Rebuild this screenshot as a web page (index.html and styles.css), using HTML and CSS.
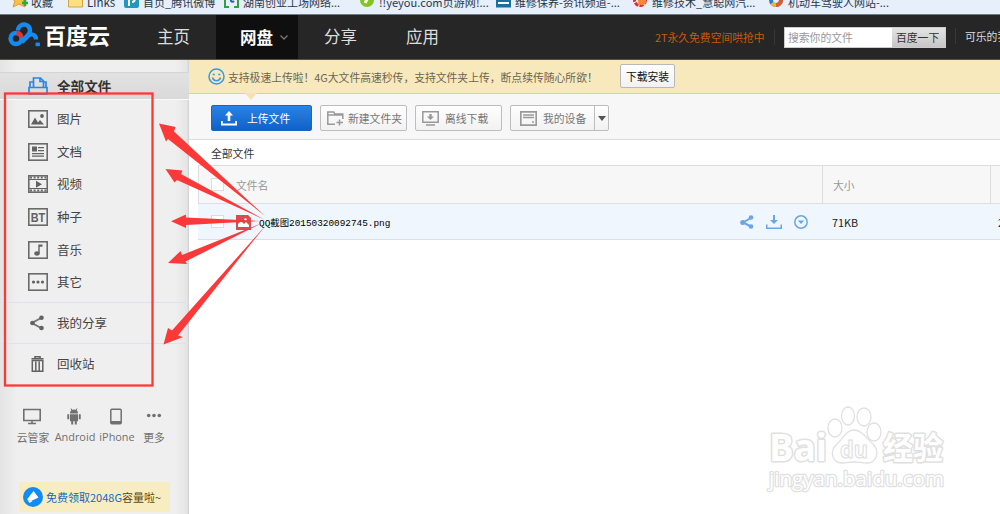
FILE: index.html
```html
<!DOCTYPE html>
<html lang="zh-CN">
<head>
    <meta charset="UTF-8">
    <meta name="viewport" content="width=device-width, initial-scale=1.0">
    <title>百度云 网盘</title>
    <link rel="stylesheet" href="styles.css">
</head>
<body>

<!-- Browser bookmarks -->
<div class="bookmarks">
    <div class="bookmark fav">
        <svg width="19" height="18" viewBox="0 0 19 18"><path d="M9 0l3 6 6 1-5 4 2 6-6-3-6 3 2-6-5-4 6-1z" fill="#fbc04a" stroke="#e59a2c"/><path d="M15 10v6M12 13h6" stroke="#3aa53a" stroke-width="2.500"/></svg>
        <span>收藏</span>
    </div>
    <div class="bookmark links">
        <svg width="15" height="16" viewBox="0 0 15 16"><path d="M.5 2h6l2 2h6v11H.5z" fill="#fbdf83" stroke="#d3a740"/></svg>
        <span>Links</span>
    </div>
    <div class="bookmark weibo">
        <svg width="15" height="16" viewBox="0 0 15 16"><rect width="15" height="16" rx="2" fill="#2397bd"/><path d="M5 14V6a3 3 0 1 1 3 4" fill="none" stroke="#fff" stroke-width="2"/></svg>
        <span>首页_腾讯微博</span>
    </div>
    <div class="bookmark market">
        <svg width="15" height="16" viewBox="0 0 15 16"><path d="M5 1H1v14h4M10 1h4v14h-4" fill="none" stroke="#2f9f4b" stroke-width="2"/><path d="M7 4v5a2 2 0 0 0 3 0" fill="none" stroke="#2767b5" stroke-width="2"/></svg>
        <span>湖南创业工场网络...</span>
    </div>
    <div class="bookmark yeyou">
        <svg width="15" height="16" viewBox="0 0 15 16"><circle cx="7" cy="8" r="7" fill="#83c51d"/><path d="M10 2L5 11" stroke="#fff" stroke-width="3"/></svg>
        <span>!!yeyou.com页游网!...</span>
    </div>
    <div class="bookmark repair">
        <svg width="15" height="16" viewBox="0 0 15 16"><rect width="15" height="15.500" fill="#16719f"/><path d="M2 11h11M3 7l2-2h5l2 2" stroke="#fff" stroke-width="2" fill="none"/></svg>
        <span>维修保养-资讯频道-...</span>
    </div>
    <div class="bookmark tech">
        <svg width="15" height="16" viewBox="0 0 15 16"><circle cx="7" cy="8" r="5.500" fill="none" stroke="#e02c2c" stroke-width="3" stroke-dasharray="4 1"/><circle cx="9" cy="9" r="4" fill="#f48b31"/></svg>
        <span>维修技术_慧聪网汽...</span>
    </div>
    <div class="bookmark driver">
        <svg width="15" height="16" viewBox="0 0 15 16"><circle cx="7" cy="8" r="5" fill="none" stroke="#2b7cd3" stroke-width="4"/><path d="M12 8a5 5 0 0 1-5 5" fill="none" stroke="#e55a2b" stroke-width="4"/><path d="M7 13a5 5 0 0 1-4-2" fill="none" stroke="#f2b52b" stroke-width="4"/></svg>
        <span>机动车驾驶人网站-...</span>
    </div>
</div>

<!-- Top navigation -->
<header class="header">
    <div class="logo">
        <svg width="33" height="27" viewBox="0 0 33 27" fill="none" stroke-width="4.400">
            <circle cx="8" cy="17.500" r="5.500" stroke="#148bf0"/>
            <path d="M10 9.500a6 6 0 1 1 10 4.500l-7 7" stroke="#148bf0"/>
            <path d="M8.500 12a5.500 5.500 0 0 1 5 4.500" stroke="#e5322d"/>
            <path d="M14 21l6.500-6.500c3.500-2.500 7.500-.5 7.500 4" stroke="#148bf0"/>
            <rect x="27.500" y="21.500" width="4.500" height="3.800" rx="1" fill="#148bf0" stroke="none"/>
        </svg>
        <span>百度云</span>
    </div>
    <nav class="nav">
        <a>主页</a>
        <a class="active">网盘<svg width="10" height="7" viewBox="0 0 10 7"><path d="M1.500 1.500L5 5l3.500-3.500" fill="none" stroke="#777" stroke-width="1.300"/></svg></a>
        <a>分享</a>
        <a>应用</a>
    </nav>
    <div class="promo">2T永久免费空间哄抢中</div>
    <div class="search">
        <div class="search-input">搜索你的文件</div>
        <div class="search-button">百度一下</div>
    </div>
    <div class="user">可乐的我们</div>
</header>

<div class="main">
    <aside class="sidebar">
        <div class="side-item all">
            <svg width="20" height="18" viewBox="0 0 20 18" fill="none" stroke="#2b86e3" stroke-width="1.700"><path d="M5.500 10V1h7l3 3v6M2 10V5h3.500M15.500 5H18v5M1 10.500h18V17H1z"/><path d="M12 1v3.500h3.500"/></svg>
            <span>全部文件</span>
        </div>
        <div class="side-group">
            <div class="side-item">
                <svg class="icon" width="20" height="18" viewBox="0 0 20 18"><rect class="box" x=".8" y=".8" width="18.400" height="16.400"/><path d="M3 14.500l4-7 3 5 2-2.500 4 4.500z"/><circle cx="14" cy="6" r="1.900"/></svg>
                <span>图片</span>
            </div>
            <div class="side-item">
                <svg class="icon" width="20" height="18" viewBox="0 0 20 18"><rect class="box" x=".8" y=".8" width="18.400" height="16.400"/><path d="M4 3.500h5v5H4zM10 4h6v1.200h-6zM10 7h6v1.200h-6zM4 10h12v1.200H4zM4 12.600h12v1.200H4z"/></svg>
                <span>文档</span>
            </div>
            <div class="side-item">
                <svg class="icon" width="20" height="18" viewBox="0 0 20 18"><rect class="box" x=".8" y=".8" width="18.400" height="16.400"/><path class="film" d="M2 2.500h16M2 15.500h16"/><path d="M1 4h18v1H1zM1 13h18v1H1zM8 5.700l6 3.500-6 3.500z"/></svg>
                <span>视频</span>
            </div>
            <div class="side-item">
                <svg class="icon" width="20" height="18" viewBox="0 0 20 18"><rect class="box" x=".8" y=".8" width="18.400" height="16.400"/><text x="10" y="13.600" text-anchor="middle" textLength="14.500" lengthAdjust="spacingAndGlyphs">BT</text></svg>
                <span>种子</span>
            </div>
            <div class="side-item">
                <svg class="icon" width="20" height="18" viewBox="0 0 20 18"><rect class="box" x=".8" y=".8" width="18.400" height="16.400"/><ellipse cx="9" cy="12.500" rx="2.700" ry="2.200"/><path d="M10.300 3.500h4.200v2.300h-2.800v6.500h-1.400z"/></svg>
                <span>音乐</span>
            </div>
            <div class="side-item">
                <svg class="icon" width="20" height="18" viewBox="0 0 20 18"><rect class="box" x=".8" y=".8" width="18.400" height="16.400"/><circle cx="5.500" cy="9" r="1.600"/><circle cx="10" cy="9" r="1.600"/><circle cx="14.500" cy="9" r="1.600"/></svg>
                <span>其它</span>
            </div>
        </div>
        <div class="side-item share">
            <svg class="icon" width="20" height="16" viewBox="0 0 20 16"><path d="M13 3L4 8l9 5" fill="none" stroke="#777" stroke-width="2"/><circle cx="13.500" cy="2.700" r="2.300"/><circle cx="4.500" cy="8" r="2.300"/><circle cx="13.500" cy="13" r="2.300"/></svg>
            <span>我的分享</span>
        </div>
        <div class="side-item trash">
            <svg class="icon" width="20" height="16" viewBox="0 0 20 16"><path d="M3.500 2.800h12M7 2.500V.8h5v1.700" fill="none" stroke="#626262" stroke-width="1.600"/><path d="M4.300 4.500h10.500v10.700H4.300zM7.800 5.500v9M11.200 5.500v9" fill="none" stroke="#626262" stroke-width="1.500"/></svg>
            <span>回收站</span>
        </div>
        <div class="clients">
            <div class="client pc">
                <svg width="18" height="16" viewBox="0 0 18 16" fill="none" stroke="#707070" stroke-width="1.600"><path d="M.8 1h16.400v11H.8zM9 12v3M5 15h8"/></svg>
                <span>云管家</span>
            </div>
            <div class="client android">
                <svg width="14" height="17" viewBox="0 0 14 17" fill="#707070"><path d="M3 5.500a4 4 0 0 1 8 0zM3 6.200h8v7H3zM.3 6.200h1.900v5H.3zM11.800 6.200h1.900v5h-1.900zM4.200 12h2v4.500h-2zM7.800 12h2v4.500h-2z"/><path d="M4 .5l1 2M10 .5l-1 2" stroke="#707070"/></svg>
                <span>Android</span>
            </div>
            <div class="client iphone">
                <svg width="12" height="16" viewBox="0 0 12 16" fill="none" stroke="#707070" stroke-width="1.500"><rect x=".8" y=".8" width="10.400" height="14.400" rx="1"/><path d="M1 13.500h10" stroke-width="2"/></svg>
                <span>iPhone</span>
            </div>
            <div class="client more">
                <svg width="16" height="16" viewBox="0 0 16 16" fill="#707070"><circle cx="2.700" cy="7" r="1.800"/><circle cx="8" cy="7" r="1.800"/><circle cx="13.300" cy="7" r="1.800"/></svg>
                <span>更多</span>
            </div>
        </div>
        <div class="capacity">
            <svg width="20" height="20" viewBox="0 0 20 20"><circle cx="10" cy="10" r="10" fill="#108cf5"/><path d="M4 12.500L10.500 4l5 6.500L8 14z" fill="#fff"/><path d="M4.500 13l2 3 3-2z" fill="#fff"/></svg>
            <span><b>免费领取2048G</b>容量啦~</span>
        </div>
    </aside>

    <section class="content">
        <div class="notice">
            <svg width="17" height="17" viewBox="0 0 17 17" fill="none" stroke="#3b97e3" stroke-width="1.500"><circle cx="8.500" cy="8.500" r="7.500"/><path d="M4.500 9.500c1 4.300 7 4.300 8 0M4.700 6.500h2M10.300 6.500h2"/></svg>
            <span class="notice-text">支持极速上传啦！4G大文件高速秒传，支持文件夹上传，断点续传随心所欲！</span>
            <button class="install">下载安装</button>
            <i class="notch"></i>
        </div>
        <div class="toolbar">
            <div class="btn upload">
                <svg width="16" height="15" viewBox="0 0 16 15" fill="#fff"><path d="M8 0l4 4.500H9.300V10H6.700V4.500H4zM0 10h1.800v2.500h12.400V10H16v4.500H0z"/></svg>
                <span>上传文件</span>
            </div>
            <div class="btn folder">
                <svg width="17" height="15" viewBox="0 0 17 15" fill="none" stroke="#999" stroke-width="1.500"><path d="M8 13.300H.8V1h6l1 2h8v5M.8 4h15M12.500 8.500v6M9.500 11.500h6.500"/></svg>
                <span>新建文件夹</span>
            </div>
            <div class="btn offline">
                <svg width="17" height="15" viewBox="0 0 17 15" fill="none" stroke="#999" stroke-width="1.500"><path d="M.8.800h15.400v10.400H.8zM4 14h9"/><path d="M7.300 3h2.400v2.500H12L8.500 9 5 5.500h2.300z" fill="#999" stroke="none"/></svg>
                <span>离线下载</span>
            </div>
            <div class="btn device">
                <svg width="17" height="15" viewBox="0 0 17 15" fill="none" stroke="#999" stroke-width="1.700"><path d="M.8.800h15.400v13.400H.8zM3 4h11M3 6.500h11M12 11h2"/></svg>
                <span>我的设备</span>
                <i class="caret"></i>
            </div>
        </div>
        <div class="crumb">全部文件</div>
        <div class="row head">
            <div class="cell name"><i class="check"></i><span>文件名</span></div>
            <div class="cell size">大小</div>
            <div class="cell date"></div>
        </div>
        <div class="row file">
            <div class="cell name">
                <i class="check"></i>
                <svg class="thumb" width="15" height="15" viewBox="0 0 15 15"><path d="M0 0h12l3 3v12H0z" fill="#d84b4f"/><path d="M2 12V9l3-3 3 3 2-2 3 3v2z" fill="#fff"/><circle cx="9.500" cy="4.500" r="1.200" fill="#fff"/></svg>
                <span class="filename">QQ截图20150320092745.png</span>
                <div class="actions">
                    <svg width="14" height="14" viewBox="0 0 14 14" fill="#6ba5e4"><path d="M11 3L3 7.500l8 4" fill="none" stroke="#6ba5e4" stroke-width="2"/><circle cx="11" cy="2.500" r="2.300"/><circle cx="2.700" cy="7.500" r="2.500"/><circle cx="11" cy="11.500" r="2.300"/></svg>
                    <svg width="16" height="14" viewBox="0 0 16 14" fill="#6ba5e4"><path d="M7 0h2v5h3L8 9 4 5h3zM0 9.500h1.500v3h13v-3H16V14H0z"/></svg>
                    <svg width="14" height="14" viewBox="0 0 14 14"><circle cx="7" cy="7" r="6.200" fill="none" stroke="#6ba5e4" stroke-width="1.500"/><path d="M3.800 5.500h6.400L7 9z" fill="#6ba5e4"/></svg>
                </div>
            </div>
            <div class="cell size">71KB</div>
            <div class="cell date">2015</div>
        </div>
    </section>
</div>

<!-- Watermark -->
<svg class="watermark" width="190" height="94" viewBox="0 0 190 94">
    <g class="wm">
        <text class="wm-bold" x="9" y="61" font-size="37" textLength="58" lengthAdjust="spacingAndGlyphs">Bai</text>
        <ellipse cx="75" cy="28" rx="7" ry="9"/>
        <ellipse cx="88" cy="16" rx="6.500" ry="9"/>
        <ellipse cx="104" cy="17" rx="7" ry="9"/>
        <ellipse cx="114" cy="32" rx="7" ry="9"/>
        <path d="M94 30c-8 0-11 9-17 14-8 7-5 19 5 19 5 0 8-1 12-1s8 1 13 1c10 0 13-12 6-19-6-5-11-14-19-14z"/>
        <text class="wm-du" x="80" y="58" font-size="24" textLength="28" lengthAdjust="spacingAndGlyphs">du</text>
        <text class="wm-bold" x="123" y="59" font-size="31" textLength="60" lengthAdjust="spacingAndGlyphs">经验</text>
        <text class="wm-url" x="9" y="86" font-size="20" textLength="175" lengthAdjust="spacingAndGlyphs">jingyan.baidu.com</text>
    </g>
</svg>

<!-- Red frame and arrows -->
<svg class="marks" width="1000" height="514" viewBox="0 0 1000 514">
    <rect x="5" y="93.500" width="147.500" height="292" fill="none" stroke="#fd3838" stroke-width="2.300"/>
    <g fill="#fd3838">
        <path d="M159 123.500L175.500 127 174 131.500 265 216 168 139 166 141.500z"/>
        <path d="M165.500 169L182.500 170.500 181 174 264 219.500 177 180 174.500 182.500z"/>
        <path d="M171 221.300L186 214.500V217.500L260 221 186 225V228z"/>
        <path d="M168 263L180.500 251 182 255 262 223 185.500 261.500 187 264z"/>
        <path d="M163.500 344.500L168 328 172 330.500 266 225 178 335.500 183 337z"/>
    </g>
</svg>

</body>
</html>
```

FILE: styles.css
```css
* {
    box-sizing: border-box;
}
body {
    margin: 0;
    width: 1000px;
    height: 514px;
    overflow: hidden;
    background: #fff;
    font-family: "Noto Sans CJK SC", sans-serif;
    font-size: 10.8px;
    color: #444;
}
svg {
    display: block;
    flex: none;
}
span {
    white-space: nowrap;
}

/* bookmarks */
.bookmarks {
    display: flex;
    height: 15px;
    background: #e6effa;
    border-bottom: 1px solid #6d7b86;
    overflow: hidden;
    color: #26384c;
}
.bookmark {
    display: flex;
    gap: 4px;
    height: 18px;
    margin-top: -7px;
    line-height: 18px;
    flex: none;
    font-size: 11px;
}
.bookmark span {
    line-height: 18px;
}
.bookmark svg {
    margin-top: -1px;
}
.fav { width: 68px; padding-left: 10px; gap: 2px; }
.fav svg { margin-top: -3px; }
.links { width: 56px; }
.links span { font-size: 11.5px; }
.weibo { width: 100px; }
.market { width: 136px; }
.yeyou { width: 136px; }
.yeyou span { font-size: 11.1px; }
.repair { width: 137px; }
.tech { width: 136px; }

/* header */
.header {
    display: flex;
    align-items: center;
    height: 45px;
    background: #262626;
    border-bottom: 1px solid #56503f;
}
.logo {
    display: flex;
    align-items: center;
    width: 134px;
    padding-left: 8px;
    gap: 3px;
    color: #fff;
    font-size: 22px;
    font-weight: bold;
    line-height: 44px;
    flex: none;
}
.logo span {
    margin-top: -6px;
}
.logo svg {
    margin-top: -5px;
}
.nav {
    display: flex;
    height: 44px;
    line-height: 42px;
    font-size: 16.5px;
    color: #ddd;
    flex: none;
}
.nav a {
    width: 82px;
    padding-left: 23px;
}
.nav a:nth-child(3) {
    padding-left: 26px;
}
.nav a:last-child {
    width: 97px;
    padding-left: 26px;
}
.nav .active {
    display: flex;
    align-items: center;
    gap: 6px;
    padding-left: 24px;
    background: #0f0f0f;
    color: #fff;
    font-weight: bold;
}
.promo {
    width: 120px;
    margin-left: 178px;
    color: #c65a0c;
    border-right: 1px solid #383838;
    white-space: nowrap;
    line-height: 16px;
    flex: none;
}
.search {
    display: flex;
    width: 162px;
    height: 21px;
    margin-left: 9px;
    background: #fff;
    border: 1px solid #ccc;
    line-height: 18px;
    flex: none;
}
.search-input {
    width: 107px;
    padding-left: 3px;
    color: #999;
}
.search-button {
    flex: 1;
    padding-left: 4px;
    background: linear-gradient(#e4e4e4, #c6c6c6);
    color: #333;
    white-space: nowrap;
}
.user {
    width: 45px;
    margin: -2px 0 0 9px;
    padding-left: 9px;
    border-left: 1px solid #383838;
    color: #ddd;
    white-space: nowrap;
    overflow: hidden;
}

/* layout */
.main {
    display: flex;
    height: 454px;
}
.sidebar {
    width: 189px;
    flex: none;
    padding-top: 12px;
    background: linear-gradient(90deg, #e4e4e4, #efefef 18px, #efefef 175px, #e5e5e5 187px, #cfcfcf);
}
.content {
    width: 811px;
    flex: none;
}

/* sidebar */
.side-item {
    display: flex;
    align-items: center;
    gap: 9px;
    height: 32.6px;
    padding-left: 28px;
    font-size: 12.5px;
    color: #444;
}
.side-item span {
    margin-top: -1px;
}
.all {
    height: 28px;
    background: linear-gradient(#e2e2e2, #d9d9d9);
    border-top: 1px solid #d4d4d4;
    border-bottom: 1px solid #fafafa;
    font-size: 13.6px;
    font-weight: bold;
    color: #333;
}
.icon {
    fill: #626262;
}
.icon .box {
    fill: none;
    stroke: #6a6a6a;
    stroke-width: 1.6;
}
.icon .film {
    fill: none;
    stroke: #6a6a6a;
    stroke-width: 2;
    stroke-dasharray: 2 1.6;
}
.icon text {
    font: bold 12px "Liberation Sans", sans-serif;
}
.side-group {
    height: 202px;
    padding-top: 3px;
}
.share,
.trash {
    height: 41px;
    border-top: 1px solid #dce3ea;
}
.clients {
    display: flex;
    height: 98px;
    padding: 24px 0 0 12px;
    color: #707070;
}
.client {
    display: flex;
    flex-direction: column;
    align-items: center;
    gap: 4px;
    width: 42px;
    line-height: 16px;
}
.client svg {
    height: 17px;
}
.pc svg {
    margin-left: -2px;
}
.android svg,
.iphone svg {
    margin-left: -3px;
}
.android span,
.iphone span {
    font-family: "Open Sans", sans-serif;
    font-size: 10.9px;
}
.more {
    width: 32px;
}
.more svg {
    margin-left: -1px;
}
.capacity {
    display: flex;
    align-items: center;
    width: 151px;
    height: 30px;
    margin-left: 19px;
    padding-left: 4px;
    gap: 3px;
    background: #f8edc1;
    color: #5f4b10;
    font-size: 11px;
}
.capacity b {
    font-weight: normal;
    color: #1467bd;
}

/* notice */
.notice {
    position: relative;
    display: flex;
    align-items: center;
    height: 34px;
    padding-left: 19px;
    gap: 3px;
    background: #f8e9bd;
    border-bottom: 1px solid #edcf83;
    color: #6b6450;
}
.notice-text {
    width: 373px;
}
.install {
    width: 55px;
    height: 24px;
    margin: -1px 0 0 16px;
    padding: 0;
    background: linear-gradient(#fff, #f1f1f1);
    border: 1px solid #b8b8b8;
    border-radius: 2px;
    font: 10.8px "Noto Sans CJK SC", sans-serif;
    color: #111;
}
.notch {
    position: absolute;
    left: 56px;
    bottom: -7px;
    border: 6px solid transparent;
    border-top: 7px solid #f6e3ab;
    border-bottom: 0;
}

/* toolbar */
.toolbar {
    display: flex;
    gap: 8px;
    height: 46px;
    padding: 11px 0 0 22px;
    background: #f7f7f7;
    border-bottom: 1px solid #ddd;
}
.btn {
    display: flex;
    align-items: center;
    height: 26px;
    padding-left: 7px;
    gap: 4px;
    background: linear-gradient(#fefefe, #f2f2f2);
    border: 1px solid #bdbdbd;
    border-radius: 2px;
    color: #777;
}
.upload {
    width: 101px;
    padding-left: 9px;
    gap: 10px;
    background: linear-gradient(#2a83e5, #0f61c9);
    border-color: #1a65bd;
    color: #fff;
}
.folder { width: 87px; padding-left: 6px; }
.offline { width: 87px; padding-left: 6px; gap: 6px; }
.device { width: 99px; padding-left: 9px; gap: 6px; }
.btn span {
    margin-top: -1px;
}
.caret {
    display: flex;
    justify-content: center;
    align-items: center;
    width: 15px;
    height: 24px;
    margin-left: 2px;
    border-left: 1px solid #bdbdbd;
}
.caret::after {
    content: "";
    border: 4.5px solid transparent;
    border-top: 5px solid #555;
    border-bottom: 0;
}

/* file list */
.crumb {
    height: 25px;
    padding-left: 22px;
    line-height: 27px;
    color: #333;
}
.row {
    display: flex;
    height: 39px;
    margin-left: 9px;
    border-bottom: 1px solid #dcdfe2;
}
.head {
    background: #f7f7f7;
    border-top: 1px solid #ddd;
    border-left: 1px solid #ddd;
    color: #999;
}
.file {
    height: 36px;
    background: #eff6fd;
    color: #222;
}
.cell {
    display: flex;
    align-items: center;
}
.name {
    width: 624px;
    padding-left: 13px;
}
.head .name {
    width: 623px;
    padding-left: 12px;
}
.size {
    width: 168px;
    padding-left: 10px;
}
.head .size,
.head .date {
    border-left: 1px solid #ddd;
}
.file .date {
    flex: 1;
    padding-left: 8px;
    overflow: hidden;
}
.date {
    flex: 1;
}
.check {
    width: 13px;
    height: 13px;
    margin-right: 12px;
    border: 1px solid #ddd;
    background: #fff;
}
.thumb {
    margin: 2px 8px 0 0;
}
.filename {
    width: 460px;
    font-family: "Liberation Mono", "Noto Sans CJK SC", monospace;
    font-size: 9.4px;
    color: #000;
}
.actions {
    display: flex;
    align-items: center;
    gap: 12px;
    margin-left: 21px;
}

/* overlays */
.watermark {
    position: absolute;
    left: 760px;
    top: 400px;
}
.wm {
    fill: #fff;
    stroke: #e0e0e0;
    stroke-width: 1.3;
    font-family: "Open Sans", "Noto Sans CJK SC", sans-serif;
}
.wm-bold {
    font-weight: bold;
    stroke-width: 3;
    stroke-linejoin: round;
    paint-order: stroke;
}
.wm-du {
    font-weight: bold;
    stroke-width: 1.2;
}
.wm-url {
    stroke-width: 2.4;
    stroke-linejoin: round;
    paint-order: stroke;
}
.marks {
    position: absolute;
    left: 0;
    top: 0;
    pointer-events: none;
}
```
